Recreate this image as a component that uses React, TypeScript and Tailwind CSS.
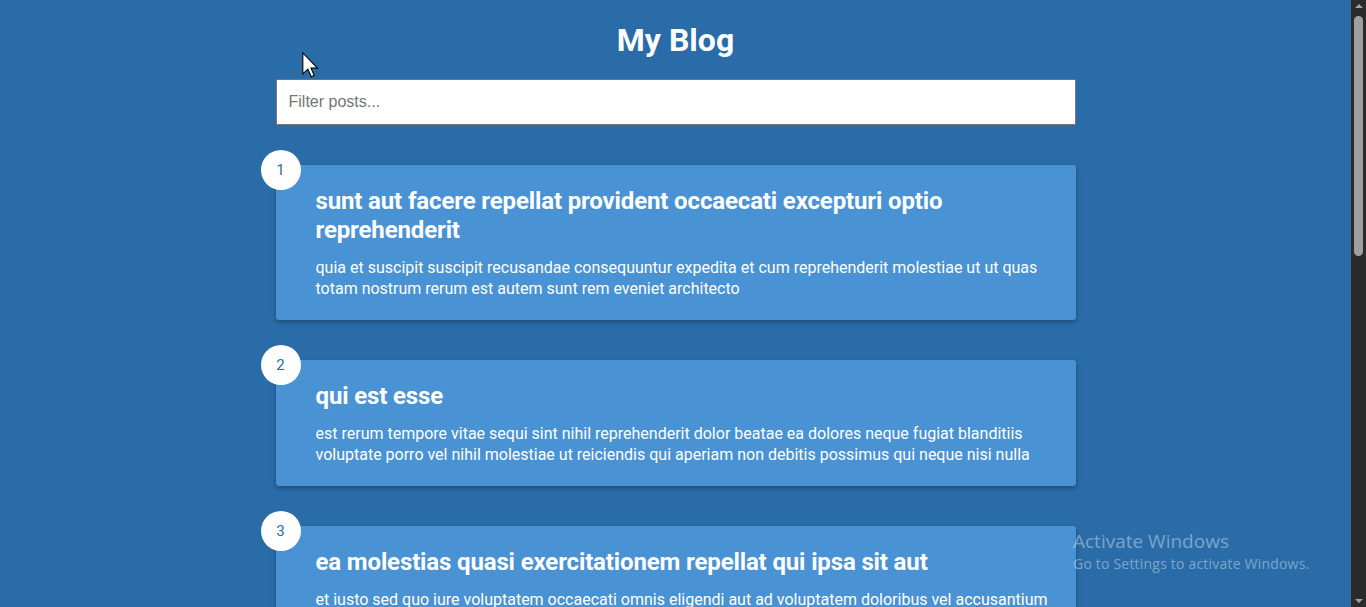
import React from "react";

const posts = [
  {
    id: 1,
    title: "sunt aut facere repellat provident occaecati excepturi optio reprehenderit",
    body: "quia et suscipit suscipit recusandae consequuntur expedita et cum reprehenderit molestiae ut ut quas totam nostrum rerum est autem sunt rem eveniet architecto",
  },
  {
    id: 2,
    title: "qui est esse",
    body: "est rerum tempore vitae sequi sint nihil reprehenderit dolor beatae ea dolores neque fugiat blanditiis voluptate porro vel nihil molestiae ut reiciendis qui aperiam non debitis possimus qui neque nisi nulla",
  },
  {
    id: 3,
    title: "ea molestias quasi exercitationem repellat qui ipsa sit aut",
    body: "et iusto sed quo iure voluptatem occaecati omnis eligendi aut ad voluptatem doloribus vel accusantium quis pariatur molestiae porro eius odio et labore et velit aut",
  },
];

const Post = ({ id, title, body }: { id: number; title: string; body: string }) => {
  return (
    <div className="relative flex w-[80vw] max-w-[800px] mt-10 px-5 pt-5 pb-[21px] bg-[#4992d3] rounded-[3px] shadow-[0_2px_4px_rgba(0,0,0,0.3)]">
      <div className="absolute -top-[15px] -left-[15px] flex items-center justify-center w-10 h-10 rounded-full bg-white text-[#296ca8] text-[15px]">
        {id}
      </div>
      <div className="ml-5">
        <h2 className="pt-[2px] text-[24px] font-bold leading-[29px] tracking-[-0.14px]">{title}</h2>
        <p className="mt-3 text-base leading-[21px]">{body}</p>
      </div>
    </div>
  );
};

const Scrollbar = () => {
  return (
    <div className="flex flex-col items-center w-[15px] h-full bg-[#2b2b2b]">
      <div className="mt-[4px] w-0 h-0 border-l-[4px] border-r-[4px] border-b-[4px] border-l-transparent border-r-transparent border-b-[#a3a3a3]" />
      <div className="mt-[8px] w-[9px] h-[240px] rounded-[5px] bg-[#9f9f9f]" />
      <div className="flex-1" />
      <div className="mb-[4px] w-0 h-0 border-l-[4px] border-r-[4px] border-t-[4px] border-l-transparent border-r-transparent border-t-[#a3a3a3]" />
    </div>
  );
};

export default function App() {
  return (
    <div className="relative flex h-screen overflow-hidden">
      <main className="flex-1 flex flex-col items-center overflow-hidden bg-[#296ca8] text-white font-['Roboto',sans-serif]">
        <h1 className="mt-[21px] text-[32px] font-bold leading-[normal]">My Blog</h1>
        <div className="mt-5 w-[80vw] max-w-[800px]">
          <input
            type="text"
            placeholder="Filter posts..."
            className="w-full p-3 text-base leading-[20px] bg-white text-black border border-[#767676] font-['Liberation_Sans',Arial,sans-serif] placeholder:text-[#757575] outline-none"
          />
        </div>
        {posts.map((p) => (
          <Post key={p.id} {...p} />
        ))}
      </main>
      <Scrollbar />

      {/* mouse pointer */}
      <svg className="absolute left-[302px] top-[52px]" width="17" height="26" viewBox="0 0 12.5 19">
        <path d="M0.6 0.6 L0.6 16 L4.3 12.6 L6.8 18.2 L9 17.2 L6.6 11.8 L11.4 11.8 Z" fill="#fff" stroke="#000" strokeWidth="0.8" strokeLinejoin="miter" />
      </svg>

      {/* windows watermark */}
      <div className="absolute left-[1073px] top-[528px] text-[rgba(255,255,255,0.4)] font-['Open_Sans',sans-serif] pointer-events-none">
        <div className="text-[19px] leading-[26px]">Activate Windows</div>
        <div className="text-[14px] leading-[20px] tracking-[0.2px]">Go to Settings to activate Windows.</div>
      </div>
    </div>
  );
}
